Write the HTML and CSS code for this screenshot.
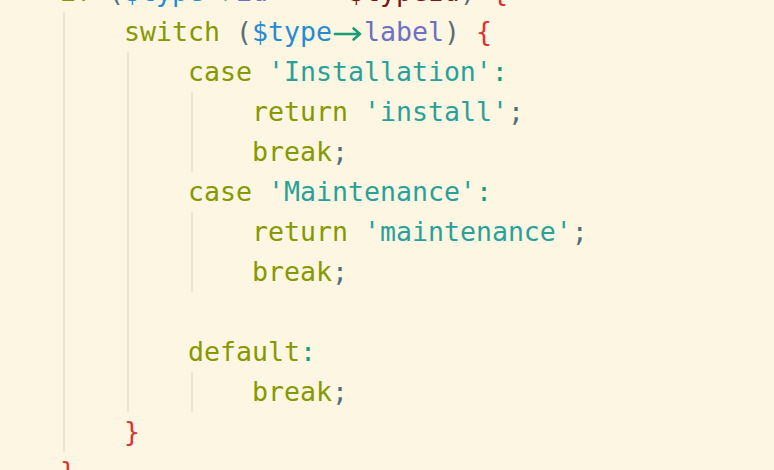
FILE: index.html
```html
<!DOCTYPE html>
<html>
<head>
<meta charset="utf-8">
<link rel="stylesheet" href="styles.css">
</head>
<body>
<div class="code">
  <div class="line"><span class="kw">if</span> <span class="pn">(</span><span class="var">$type</span><span class="arrow"><svg viewBox="0 0 32 16" width="32" height="16"><path d="M3 8 H28 M21.5 2.5 L28 8 L21.5 13.5" fill="none" stroke="currentColor" stroke-width="2.6" stroke-linecap="round" stroke-linejoin="round"/></svg></span><span class="prop">id</span> <span class="op">===</span> <span class="param">$typeId</span><span class="pn">)</span> <span class="br">{</span></div>
  <div class="block">
    <div class="line"><span class="kw">switch</span> <span class="pn">(</span><span class="var">$type</span><span class="arrow"><svg viewBox="0 0 32 16" width="32" height="16"><path d="M3 8 H28 M21.5 2.5 L28 8 L21.5 13.5" fill="none" stroke="currentColor" stroke-width="2.6" stroke-linecap="round" stroke-linejoin="round"/></svg></span><span class="prop">label</span><span class="pn">)</span> <span class="br">{</span></div>
    <div class="block">
      <div class="line"><span class="kw">case</span> <span class="str">'Installation'</span><span class="colon">:</span></div>
      <div class="block">
        <div class="line"><span class="kw">return</span> <span class="str">'install'</span><span class="pn">;</span></div>
        <div class="line"><span class="kw">break</span><span class="pn">;</span></div>
      </div>
      <div class="line"><span class="kw">case</span> <span class="str">'Maintenance'</span><span class="colon">:</span></div>
      <div class="block">
        <div class="line"><span class="kw">return</span> <span class="str">'maintenance'</span><span class="pn">;</span></div>
        <div class="line"><span class="kw">break</span><span class="pn">;</span></div>
      </div>
      <div class="line"> </div>
      <div class="line"><span class="kw">default</span><span class="colon">:</span></div>
      <div class="block">
        <div class="line"><span class="kw">break</span><span class="pn">;</span></div>
      </div>
    </div>
    <div class="line"><span class="br">}</span></div>
  </div>
  <div class="line"><span class="br">}</span></div>
</div>
</body>
</html>
```

FILE: styles.css
```css
html, body {
  margin: 0;
  padding: 0;
  background: #fdf6e3;
  overflow: hidden;
}

.code {
  margin-top: -28px;
  padding-left: 60px;
  font-family: "DejaVu Sans Mono", monospace;
  font-size: 26.57px;
  line-height: 40px;
  color: #586e75;
}

.line {
  white-space: pre;
  height: 40px;
}

.block {
  padding-left: 64px;
  background: linear-gradient(#ebe4cf, #ebe4cf) no-repeat 3px 0 / 2px 100%;
}

.kw { color: #859900; }
.pn { color: #586e75; }
.var { color: #268bd2; }
.prop { color: #6c71c4; }
.param { color: #7d1313; }
.op { color: #859900; }
.str { color: #2aa198; }
.colon { color: #1b9c74; }
.br { color: #dc322f; }

.arrow {
  display: inline-block;
  width: 32px;
  color: #1b9c74;
  vertical-align: baseline;
}

.arrow svg {
  display: block;
  position: relative;
  top: 1px;
}
```
